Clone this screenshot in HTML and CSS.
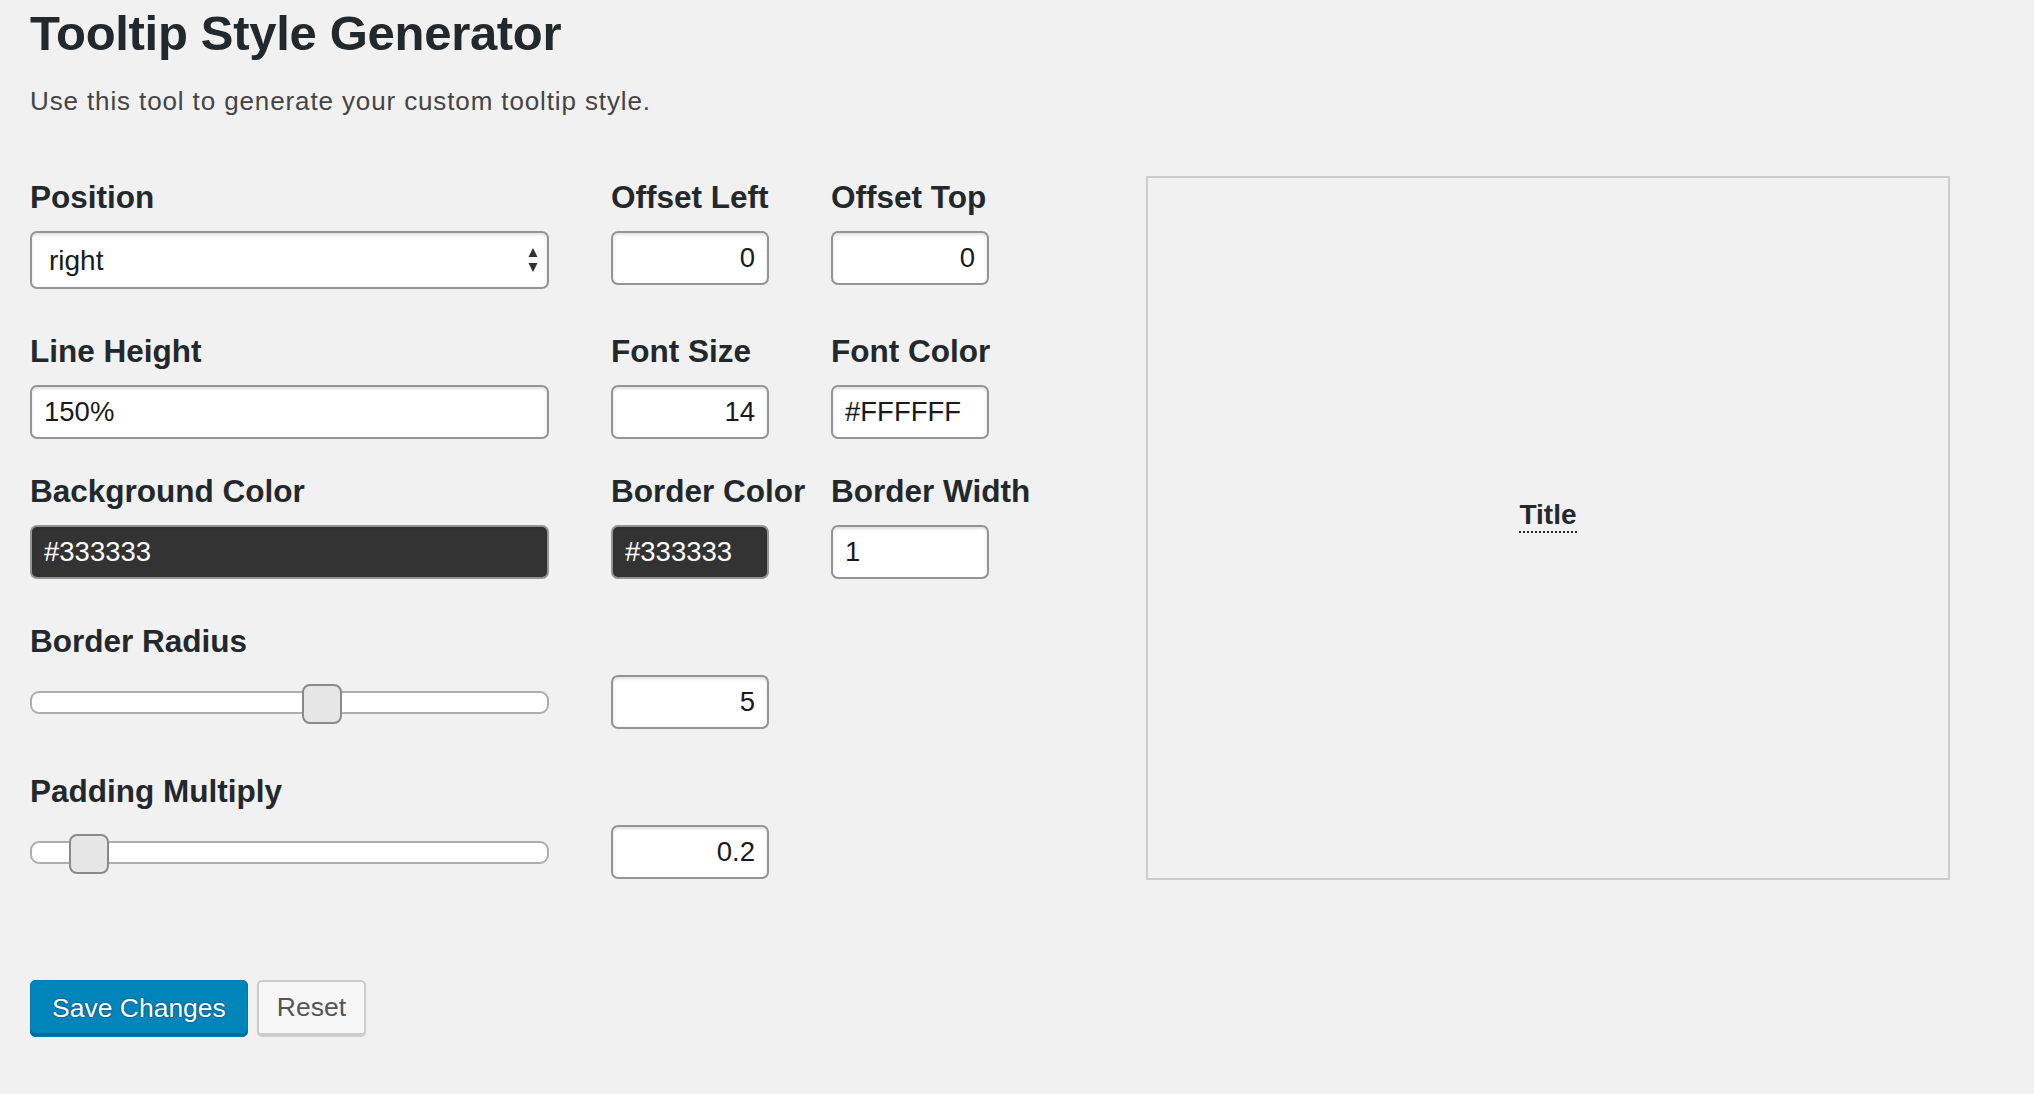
FILE: index.html
```html
<!DOCTYPE html>
<html lang="en">
<head>
<meta charset="utf-8">
<title>Tooltip Style Generator</title>
<link rel="stylesheet" href="styles.css">
</head>
<body>
<div class="wrap">
  <h1 class="page-title">Tooltip Style Generator</h1>
  <p class="intro">Use this tool to generate your custom tooltip style.</p>

  <div class="workspace">
    <form class="fields">
      <div class="field">
        <label class="field-label">Position</label>
        <div class="select-wrap">
          <select class="control select"><option>right</option></select>
          <svg class="select-arrows" width="10" height="24" viewBox="0 0 10 24"><path d="M5 0 L9.5 9 L0.5 9 Z M0.5 15 L9.5 15 L5 24 Z" fill="#333"/></svg>
        </div>
      </div>
      <div class="field">
        <label class="field-label">Offset Left</label>
        <input class="control control-num" type="text" value="0">
      </div>
      <div class="field">
        <label class="field-label">Offset Top</label>
        <input class="control control-num" type="text" value="0">
      </div>

      <div class="field">
        <label class="field-label">Line Height</label>
        <input class="control" type="text" value="150%">
      </div>
      <div class="field">
        <label class="field-label">Font Size</label>
        <input class="control control-num" type="text" value="14">
      </div>
      <div class="field">
        <label class="field-label">Font Color</label>
        <input class="control" type="text" value="#FFFFFF">
      </div>

      <div class="field">
        <label class="field-label">Background Color</label>
        <input class="control control-dark" type="text" value="#333333">
      </div>
      <div class="field">
        <label class="field-label">Border Color</label>
        <input class="control control-dark" type="text" value="#333333">
      </div>
      <div class="field">
        <label class="field-label">Border Width</label>
        <input class="control" type="text" value="1">
      </div>

      <div class="field field-slider">
        <label class="field-label">Border Radius</label>
        <input class="range" type="range" min="0" max="8.8" step="any" value="5">
      </div>
      <div class="field field-bare">
        <input class="control control-num" type="text" value="5">
      </div>

      <div class="field field-slider">
        <label class="field-label">Padding Multiply</label>
        <input class="range" type="range" min="0" max="2.6" step="any" value="0.2">
      </div>
      <div class="field field-bare">
        <input class="control control-num" type="text" value="0.2">
      </div>
    </form>

    <div class="preview">
      <span class="tip-trigger">Title</span>
    </div>
  </div>

  <div class="actions">
    <button class="btn btn-primary" type="button">Save Changes</button>
    <button class="btn btn-secondary" type="button">Reset</button>
  </div>
</div>
</body>
</html>
```

FILE: styles.css
```css
html, body {
  margin: 0;
  padding: 0;
  background: #f1f1f1;
}

body {
  font-family: "Liberation Sans", Arial, Helvetica, sans-serif;
  color: #23282d;
}

.wrap {
  padding: 0 0 0 30px;
}

.page-title {
  margin: 4px 0 0;
  font-size: 49px;
  line-height: 58px;
  font-weight: 700;
  letter-spacing: -0.3px;
  color: #23282d;
}

.intro {
  margin: 21px 0 0;
  font-size: 26px;
  line-height: 36px;
  letter-spacing: 0.88px;
  color: #444;
}

.workspace {
  display: flex;
  align-items: flex-start;
  margin-top: 57px;
}

.fields {
  display: grid;
  grid-template-columns: 519px 158px 158px;
  grid-template-rows: 154px 140px 150px 150px auto;
  column-gap: 62px;
  margin: 3px 0 0;
}

.field {
  display: flex;
  flex-direction: column;
  align-items: flex-start;
}

.field-slider {
  grid-column: 1;
}

.field-bare {
  grid-column: 2;
  padding-top: 52px;
}

.field-label {
  display: block;
  font-size: 31.5px;
  line-height: 36px;
  font-weight: 700;
  color: #23282d;
  margin-bottom: 16px;
  white-space: nowrap;
}

.control {
  box-sizing: border-box;
  width: 100%;
  height: 54px;
  margin: 0;
  padding: 0 12px;
  border: 2px solid #949494;
  border-radius: 7px;
  background: #fff;
  box-shadow: inset 0 2px 3px rgba(0, 0, 0, 0.12);
  font-family: "Liberation Sans", Arial, Helvetica, sans-serif;
  font-size: 27.5px;
  color: #1a1a1a;
  outline: none;
}

.control-num {
  text-align: right;
}

.control-dark {
  background: #333333;
  color: #ffffff;
}

.select-wrap {
  position: relative;
  width: 100%;
}

.select {
  -webkit-appearance: none;
  appearance: none;
  height: 58px;
  padding-left: 17px;
  font-size: 28px;
}

.select-arrows {
  position: absolute;
  right: 11px;
  top: 17px;
}

.range {
  -webkit-appearance: none;
  appearance: none;
  display: block;
  width: 519px;
  height: 54px;
  margin: 0;
  background: transparent;
}

.range::-webkit-slider-runnable-track {
  height: 23px;
  background: #ffffff;
  border: 2px solid #adadad;
  border-radius: 9px;
}

.range::-webkit-slider-thumb {
  -webkit-appearance: none;
  appearance: none;
  box-sizing: border-box;
  width: 40px;
  height: 40px;
  margin-top: -8.5px;
  background: #e6e6e6;
  border: 2px solid #8a8a8a;
  border-radius: 8px;
}

.preview {
  box-sizing: border-box;
  width: 804px;
  height: 704px;
  margin-left: 157px;
  border: 2px solid #cccccc;
  display: flex;
  align-items: center;
  justify-content: center;
  padding-bottom: 24px;
}

.tip-trigger {
  font-size: 28px;
  font-weight: 700;
  color: #23282d;
  border-bottom: 2px dotted #23282d;
}

.actions {
  display: flex;
  gap: 9px;
  margin-top: 100px;
}

.btn {
  box-sizing: border-box;
  height: 57px;
  margin: 0;
  font-family: "Liberation Sans", Arial, Helvetica, sans-serif;
  font-size: 26.5px;
  line-height: 1;
  border-radius: 5px;
  cursor: pointer;
}

.btn-primary {
  padding: 0 21px;
  background: #0085ba;
  color: #ffffff;
  border: 1px solid #0079ad;
  box-shadow: inset 0 -3px 0 #006a9a;
  text-shadow: 0 -1px 1px #006799, 1px 0 1px #006799, 0 1px 1px #006799, -1px 0 1px #006799;
}

.btn-secondary {
  padding: 0 18px;
  background: #f7f7f7;
  color: #555555;
  border: 2px solid #cccccc;
  border-bottom-width: 4px;
}
```
